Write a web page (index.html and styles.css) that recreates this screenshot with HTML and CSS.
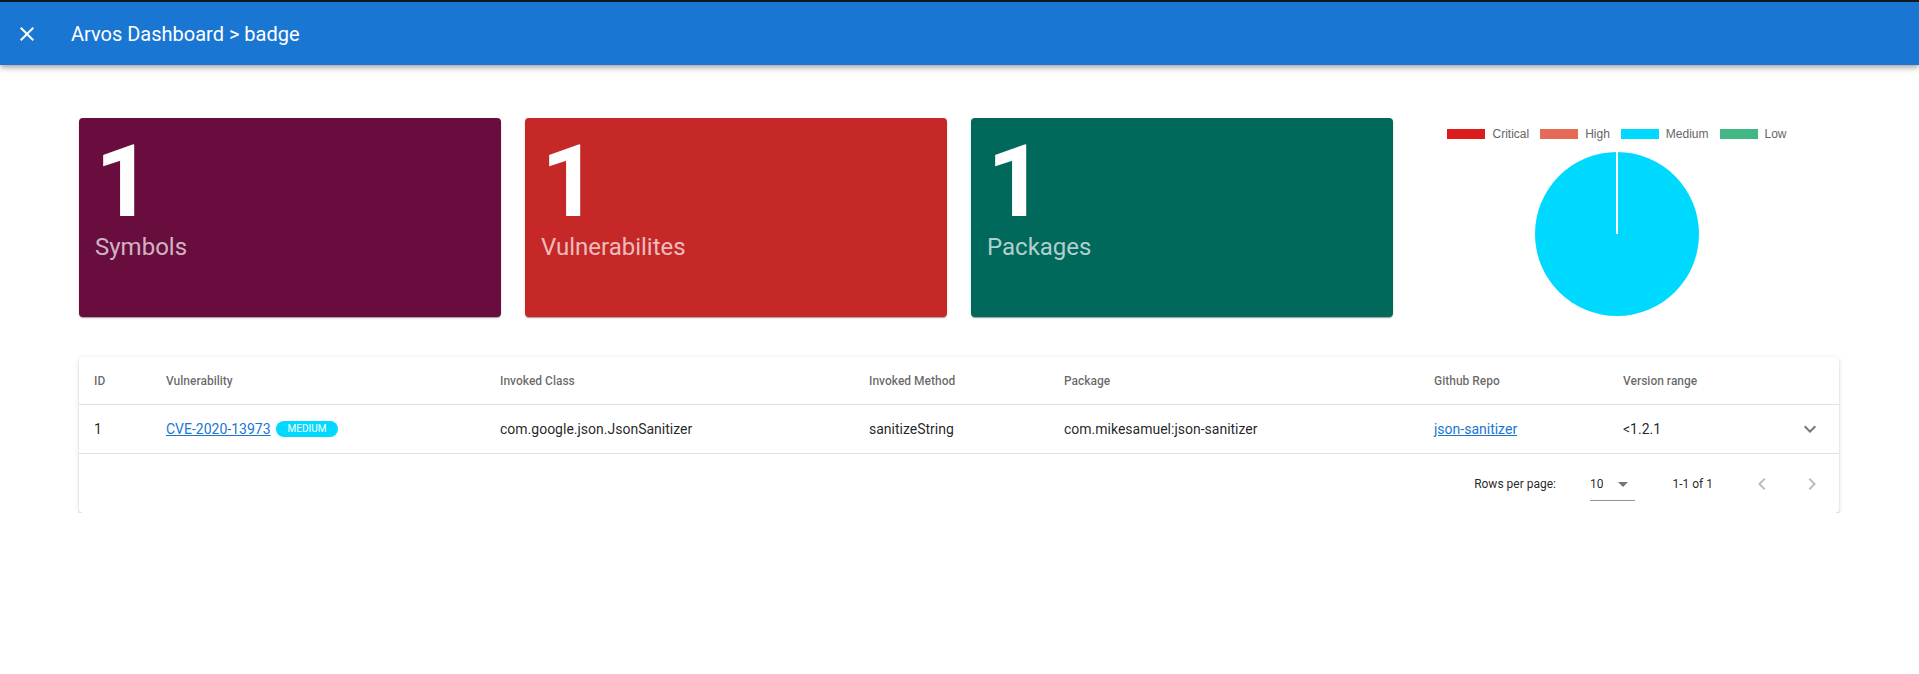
FILE: index.html
```html
<!DOCTYPE html>
<html lang="en">
<head>
<meta charset="utf-8">
<title>Arvos Dashboard</title>
<link rel="stylesheet" href="styles.css">
</head>
<body>
<header class="appbar">
  <button class="icon-btn close-btn" aria-label="close">
    <svg viewBox="0 0 24 24" width="24" height="24"><path fill="#fff" d="M19 6.41L17.59 5 12 10.59 6.41 5 5 6.41 10.59 12 5 17.59 6.41 19 12 13.41 17.59 19 19 17.59 13.41 12z"/></svg>
  </button>
  <h1 class="title">Arvos Dashboard &gt; badge</h1>
</header>

<main class="content">
  <section class="stats">
    <div class="card card-symbols">
      <div class="num">1</div>
      <div class="label">Symbols</div>
    </div>
    <div class="card card-vulns">
      <div class="num">1</div>
      <div class="label">Vulnerabilites</div>
    </div>
    <div class="card card-packages">
      <div class="num">1</div>
      <div class="label">Packages</div>
    </div>
    <div class="chart">
      <ul class="legend">
        <li class="legend-item"><span class="swatch sw-critical"></span>Critical</li>
        <li class="legend-item"><span class="swatch sw-high"></span>High</li>
        <li class="legend-item"><span class="swatch sw-medium"></span>Medium</li>
        <li class="legend-item"><span class="swatch sw-low"></span>Low</li>
      </ul>
      <svg class="pie" viewBox="0 0 164 164" width="164" height="164">
        <circle cx="82" cy="82" r="82" fill="#00d9ff"/>
        <line x1="82" y1="0" x2="82" y2="82" stroke="#fff" stroke-width="2"/>
      </svg>
    </div>
  </section>

  <section class="table-paper">
    <div class="row head">
      <div class="cell">ID</div>
      <div class="cell">Vulnerability</div>
      <div class="cell">Invoked Class</div>
      <div class="cell">Invoked Method</div>
      <div class="cell">Package</div>
      <div class="cell">Github Repo</div>
      <div class="cell">Version range</div>
      <div class="cell"></div>
    </div>
    <div class="row body">
      <div class="cell">1</div>
      <div class="cell"><a class="link" href="#">CVE-2020-13973</a><span class="badge">Medium</span></div>
      <div class="cell">com.google.json.JsonSanitizer</div>
      <div class="cell">sanitizeString</div>
      <div class="cell">com.mikesamuel:json-sanitizer</div>
      <div class="cell"><a class="link" href="#">json-sanitizer</a></div>
      <div class="cell">&lt;1.2.1</div>
      <div class="cell cell-icon">
        <svg viewBox="0 0 24 24" width="24" height="24"><path fill="rgba(0,0,0,0.54)" d="M16.59 8.59L12 13.17 7.41 8.59 6 10l6 6 6-6z"/></svg>
      </div>
    </div>
    <div class="pagination">
      <span class="caption">Rows per page:</span>
      <div class="select">
        <span class="select-value">10</span>
        <svg viewBox="0 0 24 24" width="24" height="24"><path fill="rgba(0,0,0,0.54)" d="M7 10l5 5 5-5z"/></svg>
      </div>
      <span class="caption range">1-1 of 1</span>
      <span class="page-btn prev">
        <svg viewBox="0 0 24 24" width="24" height="24"><path fill="rgba(0,0,0,0.26)" d="M15.41 7.41L14 6l-6 6 6 6 1.41-1.41L10.83 12z"/></svg>
      </span>
      <span class="page-btn next">
        <svg viewBox="0 0 24 24" width="24" height="24"><path fill="rgba(0,0,0,0.26)" d="M10 6L8.59 7.41 13.17 12l-4.58 4.59L10 18l6-6z"/></svg>
      </span>
    </div>
  </section>
</main>
</body>
</html>
```

FILE: styles.css
```css
* { box-sizing: border-box; }

body {
  margin: 0;
  background: #fff;
  font-family: Roboto, "Noto Sans", Arial, sans-serif;
  color: rgba(0, 0, 0, 0.87);
}

.appbar {
  display: flex;
  align-items: center;
  height: 65px;
  border-top: 2px solid #101820;
  background: #1976d2;
  padding-left: 15px;
  box-shadow: 0 2px 4px -1px rgba(0,0,0,0.2), 0 4px 5px 0 rgba(0,0,0,0.14), 0 1px 10px 0 rgba(0,0,0,0.12);
  position: relative;
  z-index: 1;
}

.icon-btn {
  display: flex;
  width: 24px;
  height: 24px;
  padding: 0;
  border: 0;
  background: none;
}

.title {
  margin: 0 0 0 32px;
  font-size: 20px;
  font-weight: 400;
  line-height: 24px;
  color: #fff;
}

.content {
  width: 1760px;
  margin: 53px 0 0 79px;
}

.stats {
  display: grid;
  grid-template-columns: repeat(4, 422px);
  gap: 24px;
  height: 199px;
}

.card {
  border-radius: 4px;
  padding: 14px 16px;
  box-shadow: 0 2px 1px -1px rgba(0,0,0,0.2), 0 1px 1px 0 rgba(0,0,0,0.14), 0 1px 3px 0 rgba(0,0,0,0.12);
}

.card-symbols { background: #690c3e; }
.card-vulns { background: #c62828; }
.card-packages { background: #00695c; }

.num {
  font-size: 100px;
  line-height: 100px;
  font-weight: 700;
  color: #fff;
}

.label {
  font-size: 24px;
  line-height: 30px;
  color: rgba(255, 255, 255, 0.7);
}

.chart {
  display: flex;
  flex-direction: column;
  align-items: center;
  padding-right: 22px;
  padding-top: 10px;
}

.legend {
  display: flex;
  gap: 11px;
  margin: 0;
  padding: 0;
  list-style: none;
  font-family: "Liberation Sans", Arial, sans-serif;
  font-size: 12px;
  line-height: 12px;
  color: #666;
}

.legend-item {
  display: flex;
  align-items: center;
}

.swatch {
  width: 38px;
  height: 10px;
  margin-right: 7px;
}

.sw-critical { background: #dc1c1c; }
.sw-high { background: #e56b58; }
.sw-medium { background: #00d9ff; }
.sw-low { background: #41b883; }

.pie {
  margin-top: 12px;
  display: block;
}

.table-paper {
  margin-top: 40px;
  border-radius: 4px;
  background: #fff;
  box-shadow: 0 3px 1px -2px rgba(0,0,0,0.2), 0 2px 2px 0 rgba(0,0,0,0.14), 0 1px 5px 0 rgba(0,0,0,0.12);
}

.row {
  display: grid;
  grid-template-columns: 72px 334px 369px 195px 370px 189px 1fr 58px;
  align-items: center;
  padding-left: 15px;
  border-bottom: 1px solid #e0e0e0;
}

.head {
  height: 48px;
  font-size: 12px;
  font-weight: 500;
  color: rgba(0, 0, 0, 0.6);
}

.body {
  height: 49px;
  font-size: 14px;
  color: rgba(0, 0, 0, 0.87);
}

.cell {
  display: flex;
  align-items: center;
  white-space: nowrap;
}

.cell-icon {
  justify-content: center;
}

.link {
  color: #1976d2;
  text-decoration: underline;
}

.badge {
  margin-left: 5px;
  height: 16px;
  padding: 0 12px;
  border-radius: 8px;
  background: #00d9ff;
  color: #fff;
  font-size: 10px;
  line-height: 16px;
  text-transform: uppercase;
}

.pagination {
  display: flex;
  justify-content: flex-end;
  align-items: center;
  height: 59px;
  padding-right: 15px;
  font-size: 12px;
  color: rgba(0, 0, 0, 0.87);
}

.caption {
  line-height: 20px;
}

.select {
  display: flex;
  align-items: center;
  margin-left: 34px;
  margin-right: 37px;
  padding-top: 6px;
  padding-bottom: 4px;
  border-bottom: 1px solid rgba(0, 0, 0, 0.42);
}

.select-value {
  margin-right: 8px;
}

.select svg,
.page-btn svg {
  display: block;
}

.page-btn.prev {
  margin-left: 37px;
}

.page-btn.next {
  margin-left: 26px;
}
```
